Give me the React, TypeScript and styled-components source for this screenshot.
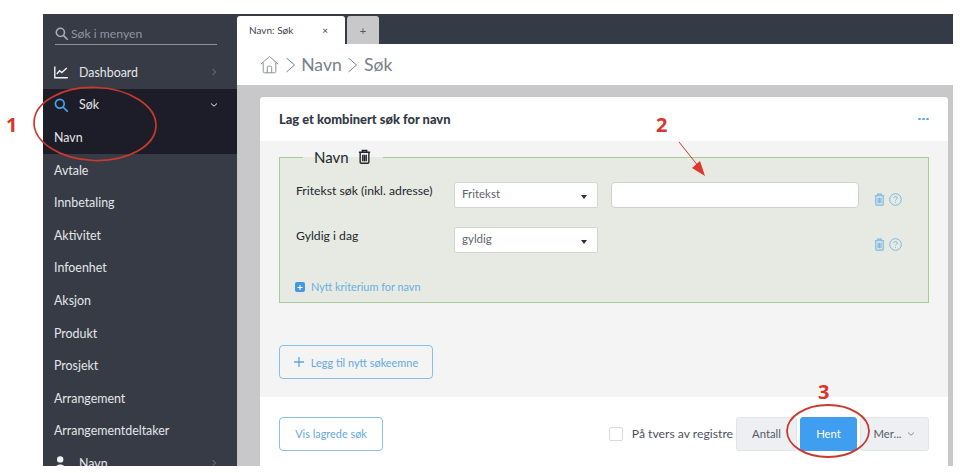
import React from "react";
import styled, { createGlobalStyle } from "styled-components";

const Global = createGlobalStyle`
  html, body { margin: 0; padding: 0; background: #fff; }
  * { box-sizing: border-box; }
  body { font-family: Lato, "Liberation Sans", sans-serif; }
`;

const Page = styled.div`
  position: relative;
  width: 960px;
  height: 473px;
  padding: 14px 7px 7px 43px;
  overflow: hidden;
  background: #fff;
`;
const Frame = styled.div`
  display: grid;
  grid-template-columns: 194px 1fr;
  height: 452px;
  overflow: hidden;
`;
const Sidebar = styled.nav`
  background: #363b46;
  overflow: hidden;
  color: #e4e6e9;
  font-size: 12.4px;
`;
const SearchBox = styled.div`
  display: flex;
  align-items: center;
  gap: 3px;
  height: 20px;
  margin: 9px 20px 11px 12px;
  padding-bottom: 1px;
  border-bottom: 1px solid #8d929a;
  box-sizing: content-box;
  font-size: 12.2px;
  color: #8f95a0;
`;
const NavGroup = styled.div`
  background: #1c1d28;
`;
const NavRow = styled.div`
  display: flex;
  align-items: center;
  height: 32.6px;
  padding: 0 19px 0 11px;
  white-space: nowrap;
`;
const NavIcon = styled.span`
  display: flex;
  width: 25px;
  flex: none;
`;
const NavText = styled.span`
  flex: 1;
`;
const Main = styled.div`
  display: flex;
  flex-direction: column;
  background: #c8c8ca;
  min-width: 0;
`;
const TabBar = styled.div`
  display: flex;
  align-items: flex-end;
  gap: 2px;
  height: 30px;
  flex: none;
  background: #353b46;
`;
const Tab = styled.div`
  display: flex;
  align-items: center;
  justify-content: space-between;
  width: 108px;
  height: 28px;
  padding: 0 17px 0 12px;
  background: #fff;
  border-radius: 3px 3px 0 0;
  font-size: 10px;
  color: #3c414b;
`;
const PlusTab = styled.div`
  display: flex;
  align-items: center;
  justify-content: center;
  width: 32px;
  height: 28px;
  background: #c8c8ca;
  border-radius: 3px 3px 0 0;
  font-size: 11px;
  color: #555;
`;
const Crumbs = styled.div`
  display: flex;
  align-items: center;
  gap: 5.6px;
  height: 41px;
  flex: none;
  padding: 0 0 0 23px;
  background: #fff;
  color: #7b818a;
  font-size: 17.6px;
`;
const Card = styled.section`
  display: flex;
  flex-direction: column;
  flex: 1;
  margin: 12px 5px 0 23px;
  background: #fff;
  border-radius: 3px 3px 0 0;
  min-height: 0;
`;
const CardHead = styled.header`
  display: flex;
  align-items: center;
  justify-content: space-between;
  height: 44px;
  flex: none;
  padding: 0 19px;
  font-size: 12.9px;
  font-weight: 900;
  color: #333845;
`;
const Dots = styled.span`
  display: flex;
  gap: 1.5px;
  & > i {
    width: 2.7px;
    height: 2.7px;
    border-radius: 50%;
    background: #5ba7e8;
  }
`;
const CardBody = styled.div`
  height: 256px;
  flex: none;
  padding: 6px 19px 0;
  background: #f4f4f4;
`;
const Group = styled.fieldset`
  margin: 0;
  height: 156px;
  padding: 0 0 0 16px;
  background: #e6eae3;
  border: 1px solid #a9cb9c;
`;
const Legend = styled.legend`
  display: flex;
  align-items: center;
  gap: 9px;
  margin-left: 7px;
  padding: 0 12px 0 11px;
  font-size: 15px;
  line-height: 20px;
  color: #23262c;
`;
const Rows = styled.div`
  display: flex;
  flex-direction: column;
  gap: 19px;
  padding-top: 15px;
`;
const Row = styled.div`
  display: flex;
  align-items: flex-start;
  height: 26px;
`;
const Label = styled.label`
  width: 158px;
  flex: none;
  font-size: 12.2px;
  line-height: 17px;
  color: #23262c;
`;
const Select = styled.div`
  display: flex;
  align-items: center;
  justify-content: space-between;
  width: 144px;
  height: 26px;
  flex: none;
  padding: 0 10px 0 7px;
  background: #fff;
  border: 1px solid #d4d6d3;
  border-radius: 2px;
  font-size: 11.5px;
  color: #5f636a;
`;
const SelectValue = styled.span`
  margin-bottom: 3px;
`;
const Caret = styled.span`
  width: 0;
  height: 0;
  margin-top: 3px;
  border-left: 3px solid transparent;
  border-right: 3px solid transparent;
  border-top: 4px solid #2c2f36;
`;
const Field = styled.div`
  width: 248px;
  height: 26px;
  flex: none;
  margin-left: 13px;
  background: #fff;
  border: 1px solid #cfd1ce;
  border-radius: 4px;
`;
const RowIcons = styled.div<{ $wide?: boolean }>`
  display: flex;
  align-items: center;
  gap: 4px;
  margin: 11px 0 0 ${(p) => (p.$wide ? 15 : 276)}px;
`;
const AddCriterion = styled.div`
  display: flex;
  align-items: center;
  gap: 6px;
  margin: 27px 0 0 -1px;
  font-size: 10.9px;
  color: #6aaee2;
`;
const PlusBox = styled.span`
  display: flex;
  align-items: center;
  justify-content: center;
  width: 10px;
  height: 10px;
  background: #4497e2;
  border-radius: 2px;
  color: #fff;
  font-size: 10px;
  line-height: 10px;
  font-weight: 700;
`;
const OutlineButton = styled.button<{ $w: number; $top?: number }>`
  display: flex;
  align-items: center;
  justify-content: center;
  gap: 7px;
  width: ${(p) => p.$w}px;
  height: 34px;
  margin-top: ${(p) => p.$top ?? 0}px;
  padding: 0;
  background: transparent;
  border: 1px solid #86c0ea;
  border-radius: 4px;
  font: 10.9px Lato, "Liberation Sans", sans-serif;
  color: #64a9de;
`;
const CardFoot = styled.footer`
  display: flex;
  align-items: center;
  justify-content: space-between;
  flex: 1;
  padding: 4px 19px 0 19px;
`;
const FootRight = styled.div`
  display: flex;
  align-items: center;
  height: 34px;
`;
const Check = styled.span`
  width: 14px;
  height: 14px;
  margin-right: 9px;
  background: #fff;
  border: 1px solid #d9dade;
  border-radius: 2px;
`;
const CheckLabel = styled.span`
  margin-right: 3px;
  font-size: 12.2px;
  color: #4e525a;
`;
const ActionButton = styled.button<{ $w: number; $primary?: boolean }>`
  display: flex;
  align-items: center;
  justify-content: center;
  gap: 6px;
  width: ${(p) => p.$w}px;
  height: 34px;
  margin-left: ${(p) => (p.$primary ? 3 : 0)}px;
  margin-right: ${(p) => (p.$primary ? 3 : 0)}px;
  padding: 0;
  background: ${(p) => (p.$primary ? "#3f9ef0" : "#eeeff3")};
  border: 1px solid ${(p) => (p.$primary ? "#3f9ef0" : "#e3e4e8")};
  border-radius: 3px;
  font: 11.3px Lato, "Liberation Sans", sans-serif;
  color: ${(p) => (p.$primary ? "#fff" : "#555a63")};
`;
const Num = styled.span<{ $x: number; $y: number }>`
  position: absolute;
  left: ${(p) => p.$x}px;
  top: ${(p) => p.$y}px;
  font: 700 20px/24px "Open Sans", "Liberation Sans", sans-serif;
  color: #d9352a;
`;
const Overlay = styled.svg`
  position: absolute;
  inset: 0;
  pointer-events: none;
`;

const Trash = ({ size = 12, color = "currentColor", sw = 1.3 }: { size?: number; color?: string; sw?: number }) => (
  <svg width={size} height={size * 1.17} viewBox="0 0 12 14" fill="none" stroke={color} strokeWidth={sw}>
    <path d="M.8 3h10.4M4 3V1.3h4V3M2 3v9.2c0 .6.4 1 1 1h6c.6 0 1-.4 1-1V3M4.4 5.2v6M6 5.2v6M7.6 5.2v6" />
  </svg>
);
const Help = () => (
  <svg width="13" height="13" viewBox="0 0 13 13" fill="none" stroke="#7db7e4" strokeWidth="1">
    <circle cx="6.5" cy="6.5" r="5.8" />
    <path d="M4.8 5.1c0-1 .8-1.6 1.7-1.6s1.7.6 1.7 1.5c0 1.3-1.7 1.3-1.7 2.6M6.5 9v.8" />
  </svg>
);
const Chevron = ({ down, color }: { down?: boolean; color: string }) => (
  <svg width="8" height="8" viewBox="0 0 8 8" fill="none" stroke={color} strokeWidth="1">
    <path d={down ? "M1 2.5 4 5.2 7 2.5" : "M2.7 1 5.5 4 2.7 7"} />
  </svg>
);
const SearchIcon = ({ color, size }: { color: string; size: number }) => (
  <svg width={size} height={size} viewBox="0 0 14 14" fill="none" stroke={color} strokeWidth="1.7">
    <circle cx="5.8" cy="5.8" r="4.4" />
    <path d="m9 9 4.2 4.2" strokeLinecap="round" />
  </svg>
);

const plainItems = ["Avtale", "Innbetaling", "Aktivitet", "Infoenhet", "Aksjon", "Produkt", "Prosjekt", "Arrangement", "Arrangementdeltaker"];

const criteria = [
  { label: "Fritekst søk (inkl. adresse)", value: "Fritekst", field: true },
  { label: "Gyldig i dag", value: "gyldig", field: false },
];

export default function App() {
  return (
    <Page>
      <Global />
      <Frame>
        <Sidebar>
          <SearchBox>
            <SearchIcon color="#a9adb4" size={13} />
            <span>Søk i menyen</span>
          </SearchBox>
          <NavRow>
            <NavIcon>
              <svg width="14" height="13" viewBox="0 0 14 13" fill="none" stroke="#f1f2f4" strokeWidth="1.4">
                <path d="M.8.5v11.3h13" />
                <path d="m2.8 8 2.8-3.2 2.2 1.8L12.8 2" />
              </svg>
            </NavIcon>
            <NavText>Dashboard</NavText>
            <Chevron color="#767b85" />
          </NavRow>
          <NavGroup>
            <NavRow>
              <NavIcon>
                <SearchIcon color="#4a9fe6" size={14} />
              </NavIcon>
              <NavText>Søk</NavText>
              <Chevron down color="#e8e9eb" />
            </NavRow>
            <NavRow>Navn</NavRow>
          </NavGroup>
          {plainItems.map((t) => (
            <NavRow key={t}>{t}</NavRow>
          ))}
          <NavRow>
            <NavIcon>
              <svg width="13" height="14" viewBox="0 0 13 14" fill="#f1f2f4">
                <circle cx="6.2" cy="3.4" r="3.2" />
                <path d="M1 13.5c0-3 2-5 5.2-5s5.2 2 5.2 5z" />
              </svg>
            </NavIcon>
            <NavText>Navn</NavText>
            <Chevron color="#767b85" />
          </NavRow>
        </Sidebar>
        <Main>
          <TabBar>
            <Tab>
              <span>Navn: Søk</span>
              <span>×</span>
            </Tab>
            <PlusTab>+</PlusTab>
          </TabBar>
          <Crumbs>
            <svg width="19" height="19" viewBox="0 0 19 19" fill="none" stroke="#8b9097" strokeWidth="1">
              <path d="M.8 9.2 9.5 1.5l8.7 7.7M3.2 7.5v9c0 .8.5 1.3 1.3 1.3h10c.8 0 1.3-.5 1.3-1.3v-9M7.3 17.8v-5.6c0-.6.4-1 1-1h2.4c.6 0 1 .4 1 1v5.6" />
            </svg>
            <svg width="11" height="16" viewBox="0 0 11 16" fill="none" stroke="#7b818a" strokeWidth="1">
              <path d="m1.5 1 8 7-8 7" />
            </svg>
            <span>Navn</span>
            <svg width="11" height="16" viewBox="0 0 11 16" fill="none" stroke="#7b818a" strokeWidth="1">
              <path d="m1.5 1 8 7-8 7" />
            </svg>
            <span>Søk</span>
          </Crumbs>
          <Card>
            <CardHead>
              <span>Lag et kombinert søk for navn</span>
              <Dots>
                <i />
                <i />
                <i />
              </Dots>
            </CardHead>
            <CardBody>
              <Group>
                <Legend>
                  Navn
                  <Trash size={13} color="#23262c" />
                </Legend>
                <Rows>
                  {criteria.map((c) => (
                    <Row key={c.label}>
                      <Label>{c.label}</Label>
                      <Select>
                        <SelectValue>{c.value}</SelectValue>
                        <Caret />
                      </Select>
                      {c.field && <Field />}
                      <RowIcons $wide={c.field}>
                        <Trash size={11} color="#7db7e4" />
                        <Help />
                      </RowIcons>
                    </Row>
                  ))}
                </Rows>
                <AddCriterion>
                  <PlusBox>+</PlusBox>
                  <span>Nytt kriterium for navn</span>
                </AddCriterion>
              </Group>
              <OutlineButton $w={154} $top={42}>
                <svg width="10" height="10" viewBox="0 0 10 10" stroke="#5ea8e2" strokeWidth="1.3">
                  <path d="M5 0v10M0 5h10" />
                </svg>
                <span>Legg til nytt søkeemne</span>
              </OutlineButton>
            </CardBody>
            <CardFoot>
              <OutlineButton $w={104}>Vis lagrede søk</OutlineButton>
              <FootRight>
                <Check />
                <CheckLabel>På tvers av registre</CheckLabel>
                <ActionButton $w={61}>Antall</ActionButton>
                <ActionButton $w={57} $primary>
                  Hent
                </ActionButton>
                <ActionButton $w={69}>
                  Mer...
                  <Chevron down color="#8a8e96" />
                </ActionButton>
              </FootRight>
            </CardFoot>
          </Card>
        </Main>
      </Frame>
      <Num $x={6} $y={113}>1</Num>
      <Num $x={656} $y={113}>2</Num>
      <Num $x={818} $y={380}>3</Num>
      <Overlay width="960" height="473" viewBox="0 0 960 473" fill="none">
        <ellipse cx="95" cy="124" rx="61" ry="36.5" stroke="#c9392e" strokeWidth="1.7" transform="rotate(2 95 124)" />
        <ellipse cx="828" cy="431" rx="41" ry="26" stroke="#c9392e" strokeWidth="1.8" />
        <path d="M679 142 699 167" stroke="#d9352a" strokeWidth="1" />
        <path d="M705 176 692 168 700 161Z" fill="#e0352a" />
      </Overlay>
    </Page>
  );
}
